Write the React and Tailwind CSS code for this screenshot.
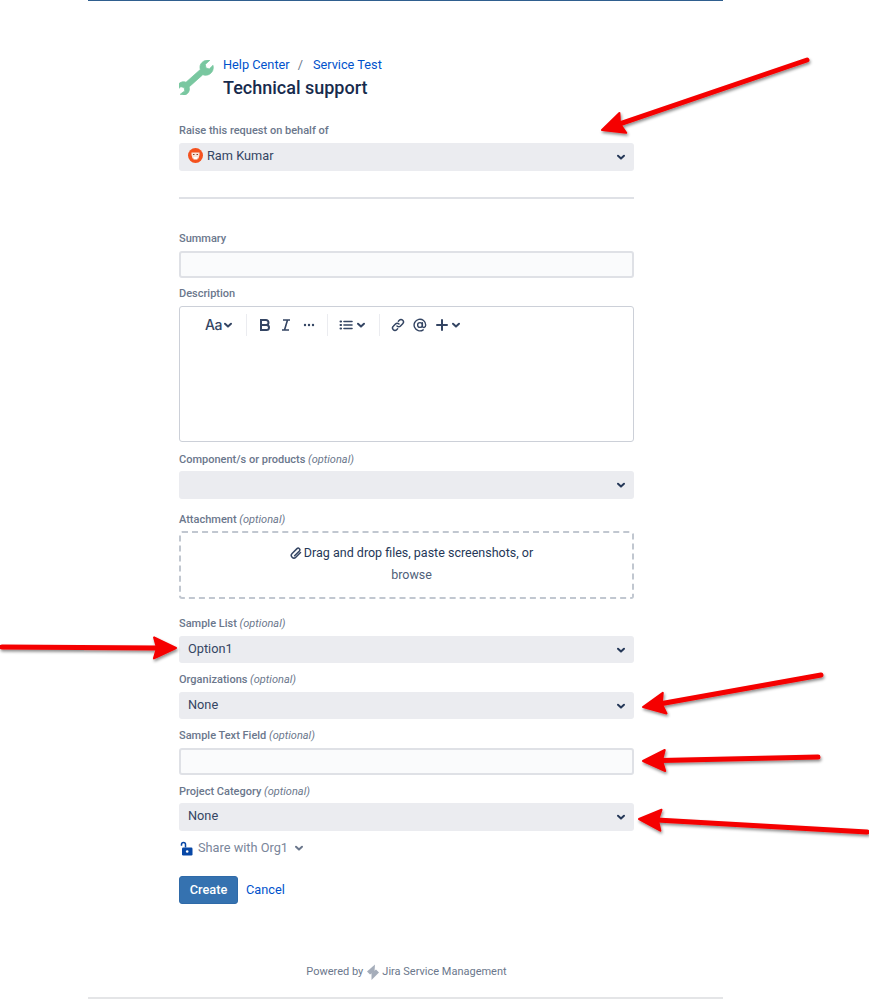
const LABEL = 'block h-4 mb-1 text-[11px] leading-4 font-medium text-[#6b778c]';
const SELECT = 'flex items-center justify-between h-[27.5px] pl-[9px] pr-[7px] rounded-[3px] bg-[#ebecf0] text-[12.75px] text-[#344563]';

function Chevron({ className = '' }) {
  return (
    <svg width="12" height="12" viewBox="0 0 12 12" fill="none" stroke="currentColor" strokeWidth="2" strokeLinecap="round" strokeLinejoin="round" className={className}>
      <path d="M3 4.8 6 7.6 9 4.8" />
    </svg>
  );
}

function Label({ text, optional }) {
  return (
    <label className={LABEL}>
      {text}
      {optional && <span className="italic font-normal"> (optional)</span>}
    </label>
  );
}

function SelectField({ label, optional, value, className = 'mt-[8.5px]', selectClassName = '', avatar }) {
  return (
    <div className={className}>
      <Label text={label} optional={optional} />
      <div className={`${SELECT} ${selectClassName}`}>
        <span className="flex items-center gap-[4px] pb-0.5">
          {avatar}
          {value}
        </span>
        <Chevron className="text-[#253858]" />
      </div>
    </div>
  );
}

function TextField({ label, optional, className = 'mt-[8.5px]' }) {
  return (
    <div className={className}>
      <Label text={label} optional={optional} />
      <div className="h-[27px] rounded-[3px] border-2 border-[#dfe1e6] bg-[#fafbfc]" />
    </div>
  );
}

function Avatar() {
  return (
    <svg width="15" height="15" viewBox="0 0 15 15">
      <circle cx="7.5" cy="7.5" r="7.5" fill="#f4511e" />
      <path d="M3.5 4.5h8v2.5l-1 3.5h-6l-1-3.5z" fill="#f7e3da" />
      <path d="M5 6.5h1.5M8.5 6.5H10" stroke="#8d3b22" strokeWidth="1" />
      <path d="M5.5 9h4v2.5h-4z" fill="#ffffff" />
    </svg>
  );
}

function Wrench() {
  return (
    <svg width="35" height="35" viewBox="0 0 36 36">
      <path
        d="M35 6.5c.8 3.8-.4 7-3.3 8.9-2.3 1.5-4.8 1.6-7.2.7L10.4 28.7c.7 2.5.2 5-1.7 6.7-1.8 1.6-4.1 2-6.6 1.2l-.8-.4 4.6-3.4-.6-3.4-3.4-1-3.9 3.6c-.4-2.9.2-5.2 2.3-7 2-1.7 4.4-2 6.9-1.1L21.9 10.8c-.8-2.9-.2-5.4 1.8-7.3C25.8 1.6 28.4.6 31.7 1.3l-4.7 4.2.8 3.7 3.3 1z"
        fill="#79c7a0"
        stroke="#79c7a0"
        strokeWidth="0.8"
        transform="translate(0 -1)"
      />
    </svg>
  );
}

function Toolbar() {
  const ink = '#344563';
  return (
    <div className="flex items-center h-[14px] mt-[11px] text-[#344563]">
      <span className="ml-[25px] w-[17px] text-[14px] leading-none font-medium font-['Inter','Liberation_Sans',sans-serif] tracking-[-0.5px]">Aa</span>
      <Chevron />
      <span className="ml-[12px] w-px h-[22px] bg-[#ebecf0]" />
      <svg className="ml-[11px]" width="14" height="14" viewBox="0 0 14 14" fill="none" stroke={ink} strokeWidth="2">
        <path d="M3 2h5a2.5 2.5 0 0 1 0 5H3zM3 7h5.5a2.5 2.5 0 0 1 0 5H3z" />
      </svg>
      <svg className="ml-[7px]" width="14" height="14" viewBox="0 0 14 14" fill="none" stroke={ink} strokeWidth="1.6">
        <path d="M4 2h7M3 12h7M8.5 2l-3 10" />
      </svg>
      <svg className="ml-[10px]" width="12" height="12" viewBox="0 0 12 12" fill={ink}>
        <circle cx="2" cy="6" r="1.2" /><circle cx="6" cy="6" r="1.2" /><circle cx="10" cy="6" r="1.2" />
      </svg>
      <span className="ml-[12px] w-px h-[22px] bg-[#ebecf0]" />
      <svg className="ml-[11px]" width="14" height="14" viewBox="0 0 14 14" fill="none" stroke={ink} strokeWidth="1.6" strokeLinecap="round">
        <path d="M5 3.5h8M5 7h8M5 10.5h8" />
        <path d="M1.5 3.5h.6M1.5 7h.6M1.5 10.5h.6" strokeWidth="2" />
      </svg>
      <Chevron className="ml-[2px]" />
      <span className="ml-[12px] w-px h-[22px] bg-[#ebecf0]" />
      <svg className="ml-[11px]" width="14" height="14" viewBox="0 0 14 14" fill="none" stroke={ink} strokeWidth="1.5" strokeLinecap="round">
        <path d="M6 8a2.4 2.4 0 0 0 3.5 0l2.2-2.3a2.4 2.4 0 0 0-3.4-3.4L7.4 3.2" />
        <path d="M8 6a2.4 2.4 0 0 0-3.5 0L2.3 8.300a2.4 2.4 0 0 0 3.4 3.4l.9-.9" />
      </svg>
      <svg className="ml-[8px]" width="14" height="14" viewBox="0 0 14 14" fill="none" stroke={ink} strokeWidth="1.4" strokeLinecap="round">
        <circle cx="7" cy="7" r="2.4" />
        <path d="M9.4 4.800v3.300c0 2.200 3.300 1.800 3.300-1.100a5.800 5.800 0 1 0-2.500 4.800" />
      </svg>
      <svg className="ml-[9px]" width="12" height="12" viewBox="0 0 12 12" stroke={ink} strokeWidth="2" strokeLinecap="round">
        <path d="M6 1v10M1 6h10" />
      </svg>
      <Chevron className="ml-[2px]" />
    </div>
  );
}

function Arrow({ x1, y1, x2, y2 }) {
  const a = Math.atan2(y1 - y2, x1 - x2);
  const deg = (a * 180) / Math.PI;
  return (
    <g>
      <line x1={x1} y1={y1} x2={x2 + 18 * Math.cos(a)} y2={y2 + 18 * Math.sin(a)} stroke="#f50000" strokeWidth="5" strokeLinecap="round" />
      <path d="M0 0 22-10.500 19 0 22 10.500Z" fill="#f50000" stroke="#f50000" strokeWidth="2" strokeLinejoin="round" transform={`translate(${x2} ${y2}) rotate(${deg})`} />
    </g>
  );
}

function Annotations() {
  return (
    <svg className="absolute left-0 top-0 pointer-events-none" width="869" height="999" viewBox="0 0 869 999">
      <defs>
        <filter id="arrow-shadow" x="-10%" y="-50%" width="120%" height="200%">
          <feDropShadow dx="1" dy="2" stdDeviation="1.500" floodColor="#000" floodOpacity="0.45" />
        </filter>
      </defs>
      <g filter="url(#arrow-shadow)">
        <Arrow x1={807} y1={60} x2={602} y2={130} />
        <Arrow x1={2} y1={647} x2={176} y2={648} />
        <Arrow x1={821} y1={675} x2={643} y2={707} />
        <Arrow x1={818} y1={757} x2={643} y2={761} />
        <Arrow x1={867} y1={832} x2={639} y2={819} />
      </g>
    </svg>
  );
}

export default function App() {
  return (
    <div className="relative w-[869px] h-[999px] overflow-hidden bg-white font-['Roboto',sans-serif]">
      <div className="flex flex-col w-[635px] h-[999px] ml-[88px] border-t border-b-2 border-t-[#2f5f8f] border-b-[#e4e5e7]">
        <main className="w-[455px] ml-[91px]">
          <header className="flex h-[38px] mt-[59px]">
            <Wrench />
            <div className="ml-[9px]">
              <nav className="flex h-[14px] mt-[-3px] text-[12.75px] leading-4 text-[#0052cc] whitespace-nowrap">
                <span>Help Center</span>
                <span className="ml-2 mr-[10px] text-[#6b778c]">/</span>
                <span>Service Test</span>
              </nav>
              <h1 className="mt-[5px] text-lg leading-6 font-medium text-[#172b4d] whitespace-nowrap">Technical support</h1>
            </div>
          </header>

          <SelectField className="mt-[25px]" label="Raise this request on behalf of" value="Ram Kumar" avatar={<Avatar />} />
          <hr className="mt-[26.5px] h-0.5 border-0 bg-[#dfe1e6]" />

          <TextField className="mt-[31.5px]" label="Summary" />

          <div className="mt-[8.5px]">
            <Label text="Description" />
            <div className="h-[136px] rounded-[3px] border border-[#ccd0d8] overflow-hidden">
              <Toolbar />
            </div>
          </div>

          <SelectField className="mt-[9.5px]" selectClassName="-mt-[0.5px]" label="Component/s or products" optional value="" />

          <div className="mt-[13px]">
            <Label text="Attachment" optional />
            <div className="flex flex-col items-center h-[68px] -mt-[0.5px] pl-[10px] rounded-[3px] border-2 border-dashed border-[#c1c7d0] text-[12.5px]">
              <div className="flex items-center mt-3 h-4 text-[#253858]">
                <svg className="mr-[2px]" width="12" height="12" viewBox="0 0 12 12" fill="none" stroke="#344563" strokeWidth="1.500" strokeLinecap="round">
                  <path d="M10.500 5.500 5.800 10.200a2.600 2.600 0 0 1-3.700-3.700L7 1.600a1.700 1.700 0 0 1 2.400 2.400L4.600 8.800" />
                </svg>
                Drag and drop files, paste screenshots, or
              </div>
              <div className="mt-1.5 h-4 leading-4 text-[#505f79]">browse</div>
            </div>
          </div>

          <SelectField className="mt-[16.75px]" label="Sample List" optional value="Option1" />
          <SelectField label="Organizations" optional value="None" />
          <TextField label="Sample Text Field" optional />
          <SelectField className="mt-[8.75px]" selectClassName="-mt-[0.5px]" label="Project Category" optional value="None" />

          <div className="flex items-center h-4 mt-[9.5px] text-[12.75px] text-[#7a869a]">
            <svg className="ml-[1px]" width="13" height="15" viewBox="0 0 13 15">
              <rect x="2" y="6.500" width="10.500" height="8" rx="1.200" fill="#0747a6" />
              <circle cx="7.200" cy="10.500" r="1.300" fill="#fff" />
              <path d="M1.500 4.800V3.400a2 2 0 0 1 4 0V6.500" fill="none" stroke="#0747a6" strokeWidth="1.500" />
            </svg>
            <span className="ml-[5px]">Share with Org1</span>
            <Chevron className="ml-[5px] text-[#6b778c]" />
          </div>

          <div className="flex items-center mt-5">
            <button className="w-[59px] h-[27.5px] rounded-[3px] border border-[#2f6aa8] bg-[#3572b0] text-[12.75px] font-medium text-white">Create</button>
            <span className="ml-2 text-[12.75px] text-[#0052cc]">Cancel</span>
          </div>

          <footer className="flex items-center justify-center h-4 mt-[60.5px] text-[11px] text-[#6b778c] whitespace-nowrap">
            Powered by
            <svg className="ml-[3px] mr-[2px]" width="14" height="16" viewBox="0 0 14 16" fill="#a5adba">
              <path d="M9 .5 1 7.500 4 10.500 8.500 7.500Z" />
              <path d="M5.500 16 13 8.500 10 5.500 5.500 9Z" />
            </svg>
            Jira Service Management
          </footer>
        </main>
      </div>
      <Annotations />
    </div>
  );
}
